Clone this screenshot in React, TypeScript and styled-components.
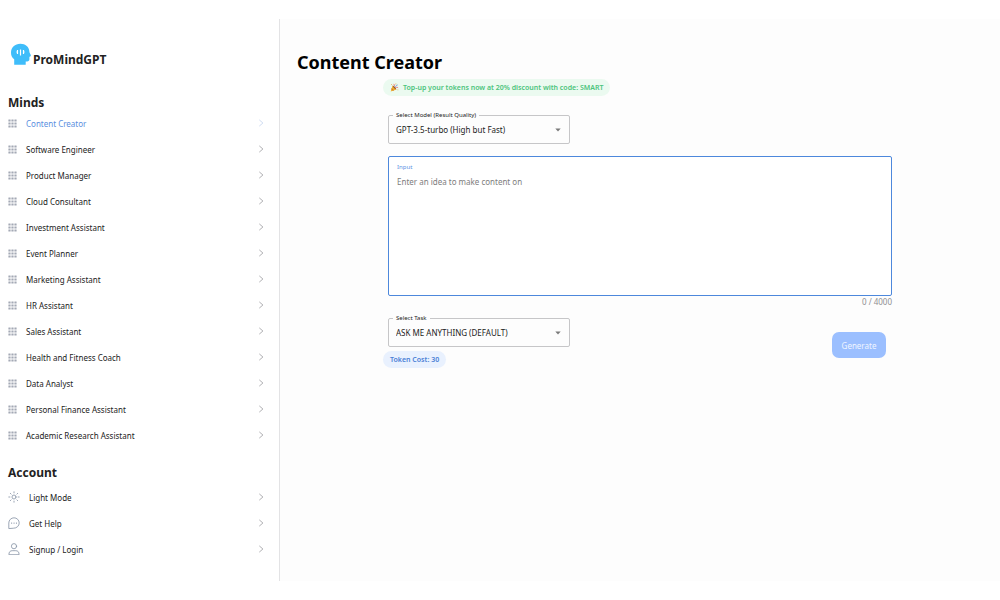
import React, { useState } from "react";
import styled, { createGlobalStyle } from "styled-components";

const GlobalStyle = createGlobalStyle`
  * { box-sizing: border-box; }
  body {
    margin: 0;
    background: #fff;
    color: #222;
    font-family: "Noto Sans", "Open Sans", sans-serif;
    font-size: 8px;
  }
  button, select, textarea { font: inherit; color: inherit; }
`;

const Page = styled.div`
  display: flex;
  min-height: 100vh;
  padding: 19px 0;
`;

const Sidebar = styled.aside`
  flex: 0 0 28%;
  min-width: 220px;
  padding: 24px 14px 0 8px;
  border-right: 1px solid #e3e3e5;
`;

const Brand = styled.a`
  display: flex;
  align-items: center;
  gap: 2px;
  height: 32px;
  padding-left: 2px;
  color: #222;
  font-size: 12px;
  font-weight: 700;
  text-decoration: none;

  svg { align-self: flex-start; }
`;

const Section = styled.section<{ $top: number; $titleGap: number }>`
  display: grid;
  gap: ${(p) => p.$titleGap}px;
  margin-top: ${(p) => p.$top}px;
`;

const SectionTitle = styled.h2`
  margin: 0;
  font-size: 12px;
  line-height: 14px;
  font-weight: 700;
`;

const List = styled.ul`
  margin: 0;
  padding: 0;
  list-style: none;
`;

const Item = styled.a<{ $active?: boolean }>`
  display: flex;
  align-items: center;
  gap: 9px;
  height: 26px;
  color: ${(p) => (p.$active ? "#5b8fe0" : "#222")};
  text-decoration: none;

  span { flex: 1; }
  svg:last-child { color: ${(p) => (p.$active ? "#c3d3ee" : "#9c9ca0")}; }
`;

const Main = styled.main`
  flex: 1;
  min-width: 0;
  background: #fdfdfd;
  padding: 29px 0 0;
`;

const Title = styled.h1`
  margin: 0 17px 3px;
  color: #000;
  font-size: 18px;
  line-height: 28px;
  font-weight: 700;
`;

const Form = styled.form`
  width: 70%;
  margin: 0 auto;
`;

const Pill = styled.p<{ $tone: "green" | "blue" }>`
  display: flex;
  align-items: center;
  gap: 4px;
  width: fit-content;
  height: 17px;
  margin: 0 0 0 -5px;
  padding: 0 7px;
  border-radius: 9px;
  font-size: 7px;
  font-weight: 600;
  white-space: nowrap;
  color: ${(p) => (p.$tone === "green" ? "#4cc47c" : "#4a7fd6")};
  background: ${(p) => (p.$tone === "green" ? "#ebfaf0" : "#e9f1fe")};
`;

const SelectFrame = styled.fieldset`
  display: grid;
  align-items: center;
  width: 182px;
  height: 33px;
  min-width: 0;
  margin: 0;
  padding: 0 8px 3px 4px;
  border: 1px solid #c6c6c8;
  border-radius: 2px;

  legend {
    padding: 0 3px;
    font-size: 6px;
    line-height: 8px;
  }
  svg {
    grid-area: 1 / 1;
    justify-self: end;
    pointer-events: none;
  }
`;

const Select = styled.select`
  grid-area: 1 / 1;
  width: 100%;
  height: 20px;
  padding: 0 16px 0 3px;
  border: 0;
  outline: 0;
  background: transparent;
  appearance: none;
`;

const ModelRow = styled.div`
  margin: 15px 0 12px;
`;

const InputBox = styled.div`
  display: flex;
  flex-direction: column;
  height: 140px;
  padding: 6px 8px;
  border: 1px solid #4d88dc;
  border-radius: 2px;
  background: #fff;

  label {
    color: #5b92e4;
    font-size: 6px;
    line-height: 9px;
  }
`;

const TextArea = styled.textarea`
  flex: 1;
  margin: 0;
  padding: 4px 0 0;
  border: 0;
  outline: 0;
  resize: none;
  background: transparent;
  line-height: 12px;

  &::placeholder { color: #7d7d7d; opacity: 1; }
`;

const Counter = styled.div`
  margin-bottom: 6px;
  color: #8f8f92;
  line-height: 12px;
  text-align: right;
`;

const Actions = styled.div`
  display: flex;
  align-items: flex-end;
  justify-content: space-between;
  padding-right: 6px;
`;

const Costs = styled.div`
  display: grid;
  gap: 4px;
`;

const Generate = styled.button`
  width: 54px;
  height: 26px;
  margin-bottom: 10px;
  padding: 0;
  border: 0;
  border-radius: 7px;
  background: #9bbfff;
  color: #f0f6ff;
`;

const Logo = () => (
  <svg width="21" height="23" viewBox="0 0 21 23" aria-hidden="true">
    <path
      d="M10.300 .8C15.500.8 19.200 4 19.400 8.800c0 1.300 1.600 3 1.500 3.900-.1.700-1.500.6-1.500 1.300v2.300c0 1.400-.8 2.100-2.200 2.100h-1.500v3.400H4.200v-5.600C2 14.600 1 12.400 1 9.700 1 4.400 5 .8 10.300.8Z"
      fill="#3fbdfa"
    />
    <path d="M7.500 7v4M10.500 6.500v6M13.500 7v4" stroke="#fff" strokeWidth="1.200" />
    <path d="M6 9h1.500M13.500 9h1.500" stroke="#fff" strokeWidth="1" opacity=".6" />
  </svg>
);

const GridIcon = () => (
  <svg width="9" height="9" viewBox="0 0 9 9" fill="#a4a9b5" aria-hidden="true">
    {[0, 3, 6].map((y) =>
      [0, 3, 6].map((x) => <rect key={`${x}${y}`} x={x + 0.4} y={y + 0.4} width="2.200" height="2.200" rx=".3" />)
    )}
  </svg>
);

const Chevron = () => (
  <svg width="8" height="8" viewBox="0 0 8 8" fill="none" stroke="currentColor" strokeWidth=".8" aria-hidden="true">
    <path d="M2.300 .9 5.900 4 2.300 7.100" />
  </svg>
);

const Arrow = () => (
  <svg width="6" height="4" viewBox="0 0 6 4" fill="#7a7a7a" aria-hidden="true">
    <path d="M.3.500h5.400L3 3.500Z" />
  </svg>
);

const LineIcon = ({ children }: { children: React.ReactNode }) => (
  <svg width="12" height="12" viewBox="0 0 12 12" fill="none" stroke="#8490a3" strokeWidth=".8" strokeLinecap="round" aria-hidden="true">
    {children}
  </svg>
);

const SunIcon = () => (
  <LineIcon>
    <circle cx="6" cy="6" r="2" />
    <path d="M6 .8v1.100M6 10.100v1.100M.8 6h1.100M10.100 6h1.100M2.300 2.300l.8.8M8.900 8.900l.8.8M9.700 2.300l-.8.8M3.100 8.900l-.8.8" />
  </LineIcon>
);

const ChatIcon = () => (
  <LineIcon>
    <path d="M.8 11.200V6A5.200 5.200 0 1 1 6 11.200Z" />
    <path d="M3.600 6.100h.1M6 6.100h.1M8.400 6.100h.1" strokeWidth="1.100" />
  </LineIcon>
);

const UserIcon = () => (
  <LineIcon>
    <circle cx="6" cy="3.200" r="2.600" />
    <path d="M.9 11.300c0-2.400 1.300-3.600 3.300-3.600h3.600c2 0 3.300 1.200 3.300 3.600Z" />
  </LineIcon>
);

const PartyIcon = () => (
  <svg width="9" height="9" viewBox="0 0 9 9" aria-hidden="true">
    <path d="M2.600 2.500 6.400 6.500.7 8.500Z" fill="#f2b02e" />
    <path d="m1.700 5 2.400 2.400-1.200.4-1.700-1.600Z" fill="#d27b26" />
    <path d="M2.600 2.500c1.400.3 3.400 2.300 3.800 4-1.600-.4-3.600-2.400-3.800-4Z" fill="#8d5a2c" />
    <path d="M4 3.500C4.900 2.700 4.200 1.600 3.600.9M5.300 4.800c1-.8 1.700-.6 2.800-.1" fill="none" stroke="#e45757" strokeWidth=".8" />
    <path d="M4.800 3.900C5.900 3.400 6.200 2.200 7.700 1.900" fill="none" stroke="#5a91dd" strokeWidth=".8" />
    <path d="M1 1.300h.8v.8H1zM7.500 6.500h.8v.8h-.8zM5.500.6h.8v.8h-.8z" fill="#e7a53b" />
  </svg>
);

const minds = [
  "Content Creator",
  "Software Engineer",
  "Product Manager",
  "Cloud Consultant",
  "Investment Assistant",
  "Event Planner",
  "Marketing Assistant",
  "HR Assistant",
  "Sales Assistant",
  "Health and Fitness Coach",
  "Data Analyst",
  "Personal Finance Assistant",
  "Academic Research Assistant",
];

const account = [
  { label: "Light Mode", Icon: SunIcon },
  { label: "Get Help", Icon: ChatIcon },
  { label: "Signup / Login", Icon: UserIcon },
];

type SelectFieldProps = { id: string; label: string; option: string };

const SelectField = ({ id, label, option }: SelectFieldProps) => (
  <SelectFrame>
    <legend>
      <label htmlFor={id}>{label}</label>
    </legend>
    <Select id={id}>
      <option>{option}</option>
    </Select>
    <Arrow />
  </SelectFrame>
);

export default function App() {
  const [idea, setIdea] = useState("");

  return (
    <Page>
      <GlobalStyle />
      <Sidebar>
        <Brand href="#home">
          <Logo />
          <span>ProMindGPT</span>
        </Brand>
        <Section $top={21} $titleGap={0}>
          <SectionTitle>Minds</SectionTitle>
          <List>
            {minds.map((name, i) => (
              <li key={name}>
                <Item href="#mind" $active={i === 0}>
                  <GridIcon />
                  <span>{name}</span>
                  <Chevron />
                </Item>
              </li>
            ))}
          </List>
        </Section>
        <Section $top={18} $titleGap={4}>
          <SectionTitle>Account</SectionTitle>
          <List>
            {account.map(({ label, Icon }) => (
              <li key={label}>
                <Item href="#account">
                  <Icon />
                  <span>{label}</span>
                  <Chevron />
                </Item>
              </li>
            ))}
          </List>
        </Section>
      </Sidebar>
      <Main>
        <Title>Content Creator</Title>
        <Form onSubmit={(e) => e.preventDefault()}>
          <Pill $tone="green">
            <PartyIcon />
            Top-up your tokens now at 20% discount with code: SMART
          </Pill>
          <ModelRow>
            <SelectField id="model" label="Select Model (Result Quality)" option="GPT-3.5-turbo (High but Fast)" />
          </ModelRow>
          <InputBox>
            <label htmlFor="idea">Input</label>
            <TextArea
              id="idea"
              maxLength={4000}
              placeholder="Enter an idea to make content on"
              value={idea}
              onChange={(e) => setIdea(e.target.value)}
            />
          </InputBox>
          <Counter>{idea.length} / 4000</Counter>
          <Actions>
            <Costs>
              <SelectField id="task" label="Select Task" option="ASK ME ANYTHING (DEFAULT)" />
              <Pill $tone="blue">Token Cost: 30</Pill>
            </Costs>
            <Generate type="submit">Generate</Generate>
          </Actions>
        </Form>
      </Main>
    </Page>
  );
}
